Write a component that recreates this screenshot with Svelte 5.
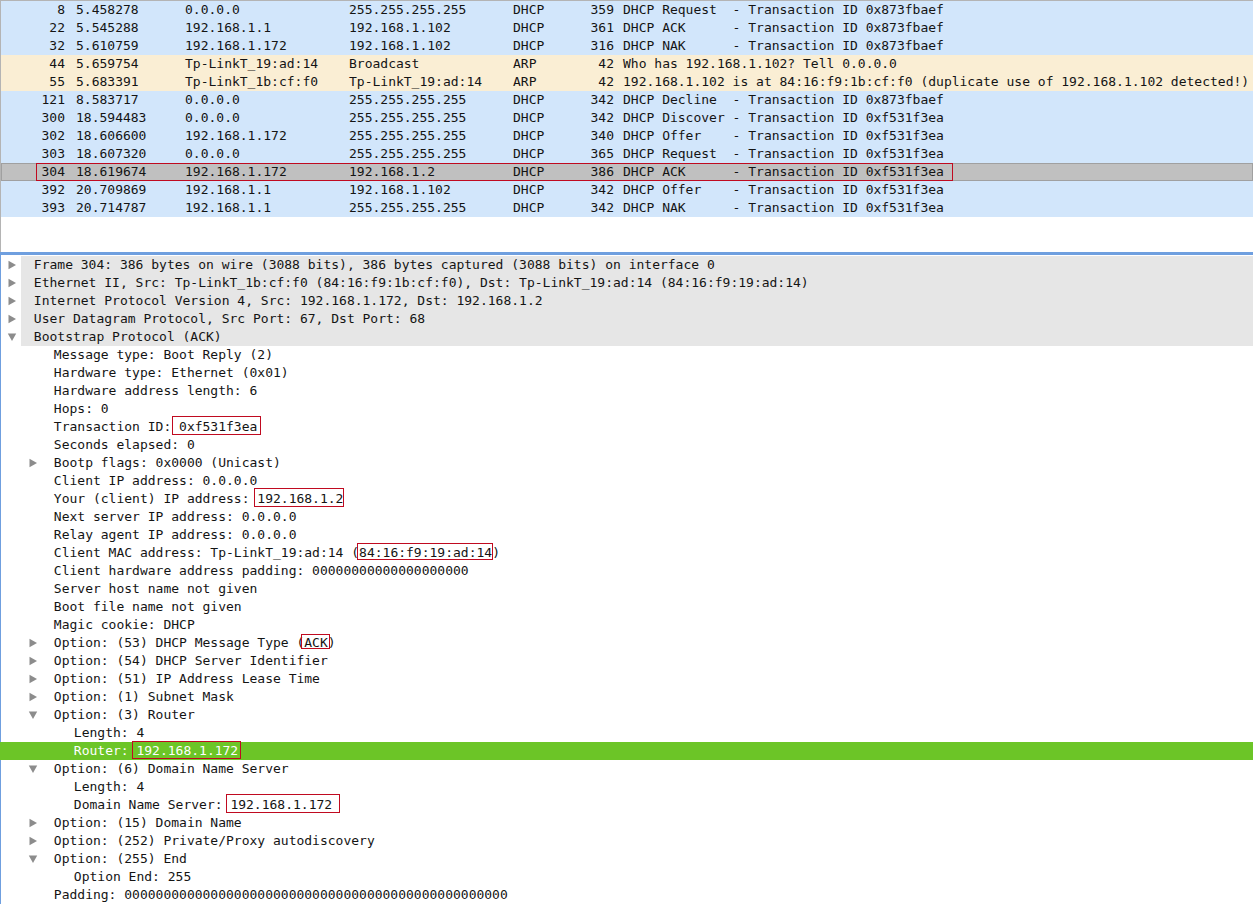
<script>
  const dhcp = (kind, id) => `DHCP ${kind.padEnd(8)} - Transaction ID ${id}`;

  const packets = [
    { no: 8, time: "5.458278", src: "0.0.0.0", dst: "255.255.255.255", proto: "DHCP", len: 359, info: dhcp("Request", "0x873fbaef") },
    { no: 22, time: "5.545288", src: "192.168.1.1", dst: "192.168.1.102", proto: "DHCP", len: 361, info: dhcp("ACK", "0x873fbaef") },
    { no: 32, time: "5.610759", src: "192.168.1.172", dst: "192.168.1.102", proto: "DHCP", len: 316, info: dhcp("NAK", "0x873fbaef") },
    { no: 44, time: "5.659754", src: "Tp-LinkT_19:ad:14", dst: "Broadcast", proto: "ARP", len: 42, info: "Who has 192.168.1.102? Tell 0.0.0.0" },
    { no: 55, time: "5.683391", src: "Tp-LinkT_1b:cf:f0", dst: "Tp-LinkT_19:ad:14", proto: "ARP", len: 42, info: "192.168.1.102 is at 84:16:f9:1b:cf:f0 (duplicate use of 192.168.1.102 detected!)" },
    { no: 121, time: "8.583717", src: "0.0.0.0", dst: "255.255.255.255", proto: "DHCP", len: 342, info: dhcp("Decline", "0x873fbaef") },
    { no: 300, time: "18.594483", src: "0.0.0.0", dst: "255.255.255.255", proto: "DHCP", len: 342, info: dhcp("Discover", "0xf531f3ea") },
    { no: 302, time: "18.606600", src: "192.168.1.172", dst: "255.255.255.255", proto: "DHCP", len: 340, info: dhcp("Offer", "0xf531f3ea") },
    { no: 303, time: "18.607320", src: "0.0.0.0", dst: "255.255.255.255", proto: "DHCP", len: 365, info: dhcp("Request", "0xf531f3ea") },
    { no: 304, time: "18.619674", src: "192.168.1.172", dst: "192.168.1.2", proto: "DHCP", len: 386, info: dhcp("ACK", "0xf531f3ea"), selected: true },
    { no: 392, time: "20.709869", src: "192.168.1.1", dst: "192.168.1.102", proto: "DHCP", len: 342, info: dhcp("Offer", "0xf531f3ea") },
    { no: 393, time: "20.714787", src: "192.168.1.1", dst: "255.255.255.255", proto: "DHCP", len: 342, info: dhcp("NAK", "0xf531f3ea") },
  ];

  // level, arrow (r/d/none), text; box = red annotation with [left, right, top, bottom] offsets
  const details = [
    { level: 0, arrow: "r", text: "Frame 304: 386 bytes on wire (3088 bits), 386 bytes captured (3088 bits) on interface 0" },
    { level: 0, arrow: "r", text: "Ethernet II, Src: Tp-LinkT_1b:cf:f0 (84:16:f9:1b:cf:f0), Dst: Tp-LinkT_19:ad:14 (84:16:f9:19:ad:14)" },
    { level: 0, arrow: "r", text: "Internet Protocol Version 4, Src: 192.168.1.172, Dst: 192.168.1.2" },
    { level: 0, arrow: "r", text: "User Datagram Protocol, Src Port: 67, Dst Port: 68" },
    { level: 0, arrow: "d", text: "Bootstrap Protocol (ACK)" },
    { level: 1, text: "Message type: Boot Reply (2)" },
    { level: 1, text: "Hardware type: Ethernet (0x01)" },
    { level: 1, text: "Hardware address length: 6" },
    { level: 1, text: "Hops: 0" },
    { level: 1, text: "Transaction ID: ", mark: "0xf531f3ea", box: [7, 4, 2, -1] },
    { level: 1, text: "Seconds elapsed: 0" },
    { level: 1, arrow: "r", text: "Bootp flags: 0x0000 (Unicast)" },
    { level: 1, text: "Client IP address: 0.0.0.0" },
    { level: 1, text: "Your (client) IP address: ", mark: "192.168.1.2", box: [3, 1, 2, -1] },
    { level: 1, text: "Next server IP address: 0.0.0.0" },
    { level: 1, text: "Relay agent IP address: 0.0.0.0" },
    { level: 1, text: "Client MAC address: Tp-LinkT_19:ad:14 (", mark: "84:16:f9:19:ad:14", after: ")", box: [2, 1, 1, -2] },
    { level: 1, text: "Client hardware address padding: 00000000000000000000" },
    { level: 1, text: "Server host name not given" },
    { level: 1, text: "Boot file name not given" },
    { level: 1, text: "Magic cookie: DHCP" },
    { level: 1, arrow: "r", text: "Option: (53) DHCP Message Type (", mark: "ACK", after: ")", box: [3, 2, 0, -3] },
    { level: 1, arrow: "r", text: "Option: (54) DHCP Server Identifier" },
    { level: 1, arrow: "r", text: "Option: (51) IP Address Lease Time" },
    { level: 1, arrow: "r", text: "Option: (1) Subnet Mask" },
    { level: 1, arrow: "d", text: "Option: (3) Router" },
    { level: 2, text: "Length: 4" },
    { level: 2, text: "Router: ", mark: "192.168.1.172", box: [4, 3, 1, -1], selected: true },
    { level: 1, arrow: "d", text: "Option: (6) Domain Name Server" },
    { level: 2, text: "Length: 4" },
    { level: 2, text: "Domain Name Server: ", mark: "192.168.1.172", box: [4, 8, 2, -1] },
    { level: 1, arrow: "r", text: "Option: (15) Domain Name" },
    { level: 1, arrow: "r", text: "Option: (252) Private/Proxy autodiscovery" },
    { level: 1, arrow: "d", text: "Option: (255) End" },
    { level: 2, text: "Option End: 255" },
    { level: 1, text: "Padding: 0000000000000000000000000000000000000000000000000" },
  ];
</script>

<div class="window">
  <div class="list">
    {#each packets as p}
      <div class="packet" class:arp={p.proto === "ARP"} class:selected={p.selected}>
        <span class="no">{p.no}</span>
        <span class="time">{p.time}</span>
        <span class="addr">{p.src}</span>
        <span class="addr">{p.dst}</span>
        <span class="proto">{p.proto}</span>
        <span class="len">{p.len}</span>
        <span class="info">{p.info}</span>
        {#if p.selected}<span class="row-box"></span>{/if}
      </div>
    {/each}
  </div>

  <div class="details">
    {#each details as d}
      <div class="node lv{d.level}" class:head={d.level === 0} class:selected={d.selected}>
        {#if d.arrow}
          <svg class="arrow" width="10" height="10" viewBox="0 0 10 10">
            {#if d.arrow === "r"}
              <path d="M1.5 0.8 L9 5 L1.5 9.2 Z" />
            {:else}
              <path d="M0.8 1.5 L9.2 1.5 L5 9 Z" />
            {/if}
          </svg>
        {/if}
        <span class="label">{d.text}{#if d.mark}<span
              class="mark"
              style="--l:{d.box[0]}px;--r:{d.box[1]}px;--t:{d.box[2]}px;--b:{d.box[3]}px">{d.mark}</span>{/if}{d.after ?? ""}</span>
      </div>
    {/each}
  </div>
</div>

<style>
  :global(body) {
    background: #fff;
  }
  .window {
    width: 1253px;
    height: 908px;
    overflow: hidden;
    font-family: "DejaVu Sans Mono", "Liberation Mono", monospace;
    font-size: 13px;
    line-height: 18px;
    color: #141414;
  }
  .list {
    height: 252px;
    box-sizing: border-box;
    border-top: 1px solid #b4b4b4;
    border-left: 1px solid #b4b4b4;
  }
  .packet {
    display: flex;
    position: relative;
    height: 18px;
    background: #d2e6fb;
  }
  .packet.arp {
    background: #faeed4;
  }
  .packet.selected {
    background: #c0c0c0;
    box-shadow: inset 0 0 0 1px #a0a0a0;
  }
  .no {
    width: 64px;
    text-align: right;
  }
  .time {
    width: 109px;
    margin-left: 11px;
  }
  .addr {
    width: 164px;
  }
  .proto {
    width: 62px;
  }
  .len {
    width: 39px;
    text-align: right;
  }
  .info {
    margin-left: 9px;
    white-space: pre;
  }
  .row-box {
    position: absolute;
    left: 35px;
    top: 0;
    width: 917px;
    height: 18px;
    box-sizing: border-box;
    border: 1px solid #c00a20;
  }
  .details {
    border-top: 3px solid #6f9fdf;
    border-left: 1px solid #6f9fdf;
    padding-top: 1px;
  }
  .node {
    position: relative;
    height: 18px;
    white-space: pre;
  }
  .lv0 {
    padding-left: 25px;
  }
  .lv1 {
    padding-left: 45px;
  }
  .lv2 {
    padding-left: 65px;
  }
  .node.head::before {
    content: "";
    position: absolute;
    left: 20px;
    right: 0;
    top: 0;
    bottom: 0;
    background: #e6e6e6;
  }
  .node.selected {
    margin-left: -1px;
    padding-left: 66px;
    background: #6cc527;
    color: #fff;
  }
  .label {
    position: relative;
  }
  .arrow {
    position: absolute;
    top: 4px;
    fill: #8c8c8c;
    z-index: 1;
  }
  .lv0 .arrow {
    left: 6px;
  }
  .lv1 .arrow {
    left: 27px;
  }
  .mark {
    display: inline-block;
    position: relative;
  }
  .mark::after {
    content: "";
    position: absolute;
    left: calc(var(--l) * -1);
    right: calc(var(--r) * -1);
    top: calc(var(--t) * -1);
    bottom: calc(var(--b) * -1);
    border: 1px solid #c00a20;
  }
</style>
